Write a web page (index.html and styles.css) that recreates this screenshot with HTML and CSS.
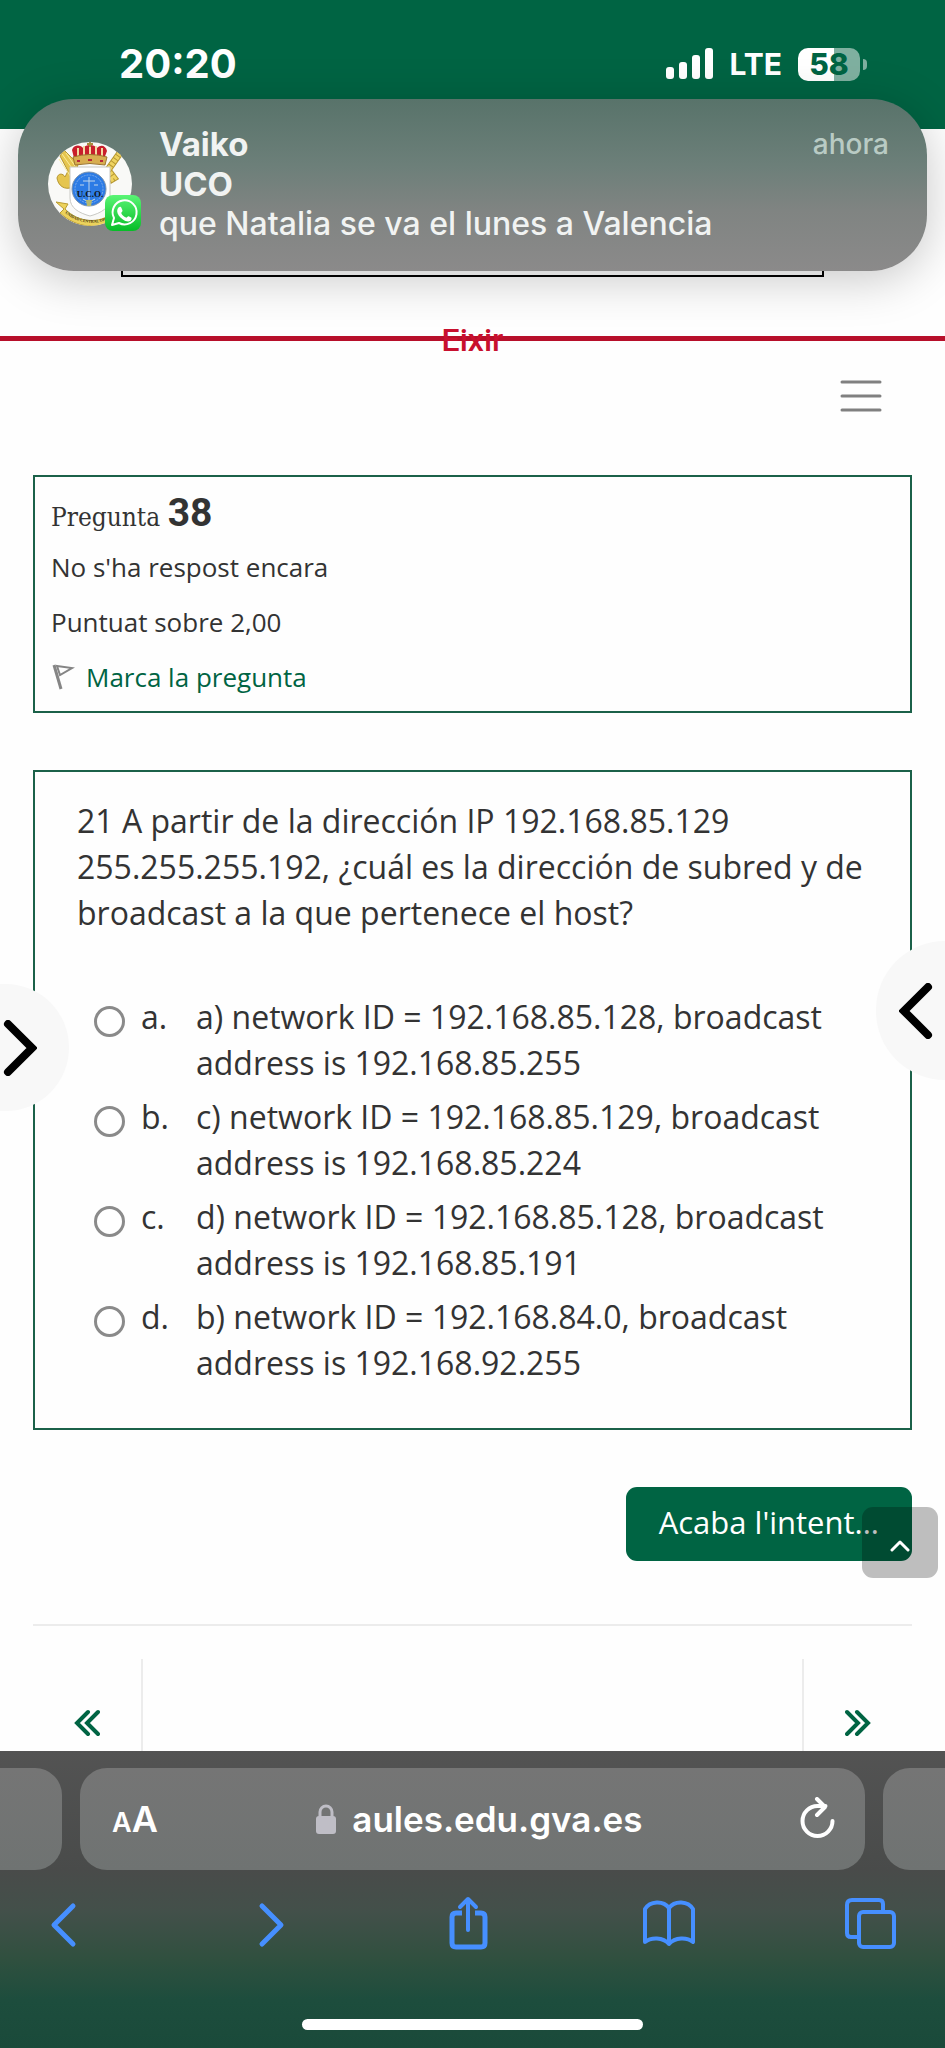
FILE: index.html
```html
<!DOCTYPE html>
<html lang="ca">
<head>
<meta charset="utf-8">
<meta name="viewport" content="width=device-width, initial-scale=1">
<title>Aules - Pregunta 38</title>
<link rel="stylesheet" href="styles.css">
</head>
<body>
<div class="status-bar">
  <time class="clock">20:20</time>
  <div class="status-icons">
    <svg class="signal" width="48" height="32" viewBox="0 0 48 32" aria-hidden="true"><g fill="#fff"><rect x="0" y="19" width="8" height="12" rx="3"/><rect x="13" y="14" width="8" height="17" rx="3"/><rect x="26" y="7" width="8" height="24" rx="3"/><rect x="39" y="0" width="8" height="31" rx="3"/></g></svg>
    <span class="network">LTE</span>
    <span class="battery"><span class="battery-level">58</span><span class="battery-tip"></span></span>
  </div>
</div>

<aside class="notification">
  <svg class="avatar" width="96" height="84" viewBox="0 0 96 84" role="img" aria-label="UCO, WhatsApp">
    <defs>
      <clipPath id="face"><circle cx="42" cy="42" r="42"/></clipPath>
      <linearGradient id="wa" x1="0" y1="0" x2="0" y2="1"><stop offset="0" stop-color="#5af575"/><stop offset="1" stop-color="#06bd27"/></linearGradient>
    </defs>
    <circle cx="42" cy="42" r="42" fill="#f9f9f7"/>
    <g clip-path="url(#face)">
      <path d="M16 8l14 14-5 23c-9 4-15-2-16-9 1-5 6-5 8-1l3-6-8-15z" fill="#e5c54f" stroke="#b59632"/>
      <path d="M14 12l12 17M11 17l12 18M18 11l9 13" stroke="#faec9a" fill="none"/>
      <path d="M72 11L60 28l6 8-5 3" fill="none" stroke="#b59632" stroke-width="7"/>
      <path d="M72 11L60 28l6 8-5 3" fill="none" stroke="#efd35f" stroke-width="5" stroke-dasharray="3 1"/>
      <path d="M8 60l12 2-3 5c14 14 34 15 48 4l5 7C50 88 28 86 12 71l4-4z" fill="#ecd25c" stroke="#b99b31"/>
      <path id="ribbon" d="M17 71c14 12 34 13 50 3" fill="none"/>
      <path d="M22 25h40v31c0 10-9 15-20 18-11-3-20-8-20-18z" fill="#fff" stroke="#c8c8c4"/>
      <path d="M26 16L24 8c2-6 9-5 11-2 3-4 11-4 14 0 4-4 9-2 10 3l-3 8z" fill="#c81e2b"/>
      <path d="M30 14V6M36 14V4M42 14V3M48 14V4M54 14V6" stroke="#f4d9a1" stroke-width="2"/>
      <path d="M42 0v5M39 2h6" stroke="#a78b3c" stroke-width="2"/>
      <path d="M25 15q17-5 34 0l-2 8q-15-3-30 0z" fill="#d8ad50" stroke="#9c7530"/>
      <path d="M29 19h3M40 18h4M52 19h3" stroke="#b7263a" stroke-width="2"/>
      <circle cx="41" cy="47" r="17" fill="#2c7be5" stroke="#7f93aa"/>
      <circle cx="41" cy="47" r="14" fill="none" stroke="#7cabea" stroke-dasharray="2 1"/>
      <path d="M41 35v26M35 39h12M32 43h4M46 43h4M35 57q6 4 12 0" stroke="#c3d8e9" fill="none"/>
      <path d="M38 58h6l-1 6h-4z" fill="#b7b96b"/>
    </g>
    <text font-family="Liberation Serif, serif" font-weight="bold" font-size="4" fill="#463c14"><textPath href="#ribbon">UNIDAD CENTRAL OPER</textPath></text>
    <text x="42" y="55" text-anchor="middle" font-family="Liberation Serif, serif" font-size="9" font-weight="bold" fill="#111">U.C.O.</text>
    <rect x="57" y="53" width="36" height="36" rx="8" fill="url(#wa)"/>
    <path d="M64 83l2-7a12 12 0 1 1 5 5z" fill="none" stroke="#fff" stroke-width="2" stroke-linejoin="round"/>
    <path d="M70.500 65.500c1-1 2.500-1 3 .500l1 2.500c.300.800-1.500 2-1.200 2.700 1 2 2.500 3.500 4.700 4.400.800.300 1.800-1.800 2.600-1.400l2.600 1.300c.800.400.300 2.500-.600 3.200-2 1.500-5 .800-8-1.400-3.200-2.300-5.200-5.200-5.400-7.800-.100-1.700.500-3.200 1.300-4z" fill="#fff"/>
  </svg>
  <div class="notification-text">
    <div class="notification-head"><strong>Vaiko</strong><span class="when">ahora</span></div>
    <strong>UCO</strong>
    <p>que Natalia se va el lunes a Valencia</p>
  </div>
</aside>

<header class="site-header">
  <div class="banner-box"></div>
  <a class="exit" href="#">Eixir</a>
</header>

<main class="page">
  <div class="menu-row">
    <button class="menu" type="button" aria-label="Menú"><svg width="42" height="34" viewBox="0 0 42 34"><path d="M2 3h38M2 17h38M2 31h38" stroke="#808080" stroke-width="3" stroke-linecap="round"/></svg></button>
  </div>

  <section class="card info">
    <h1>Pregunta <span>38</span></h1>
    <p>No s'ha respost encara</p>
    <p>Puntuat sobre 2,00</p>
    <a class="flag" href="#"><svg width="24" height="26" viewBox="0 0 24 26" aria-hidden="true"><path d="M3 1l7 24" stroke="#858585" stroke-width="3"/><path d="M6 2l15 2-12 7z" fill="none" stroke="#858585" stroke-width="2"/></svg>Marca la pregunta</a>
  </section>

  <form class="card question">
    <p class="stem">21 A partir de la dirección IP 192.168.85.129 255.255.255.192, ¿cuál es la dirección de subred y de broadcast a la que pertenece el host?</p>
    <div class="answers">
      <label><input type="radio" name="answer" value="a"><span>a.</span><span>a) network ID = 192.168.85.128, broadcast address is 192.168.85.255</span></label>
      <label><input type="radio" name="answer" value="b"><span>b.</span><span>c) network ID = 192.168.85.129, broadcast address is 192.168.85.224</span></label>
      <label><input type="radio" name="answer" value="c"><span>c.</span><span>d) network ID = 192.168.85.128, broadcast address is 192.168.85.191</span></label>
      <label><input type="radio" name="answer" value="d"><span>d.</span><span>b) network ID = 192.168.84.0, broadcast address is 192.168.92.255</span></label>
    </div>
  </form>

  <div class="actions"><button class="finish" type="button">Acaba l'intent...</button></div>

  <nav class="pager">
    <a href="#" aria-label="Activitat anterior"><svg width="26" height="28" viewBox="0 0 26 28"><path d="M14 3L3 14l11 11M24 3L13 14l11 11"/></svg></a>
    <span class="pager-middle"></span>
    <a href="#" aria-label="Activitat següent"><svg width="26" height="28" viewBox="0 0 26 28"><path d="M2 3l11 11L2 25M12 3l11 11-11 11"/></svg></a>
  </nav>

  <button class="drawer drawer-left" type="button" aria-label="Obri el calaix esquerre"><svg width="36" height="56" viewBox="0 0 36 56"><path d="M7 4l24 24L7 52"/></svg></button>
  <button class="drawer drawer-right" type="button" aria-label="Obri el calaix dret"><svg width="36" height="56" viewBox="0 0 36 56"><path d="M29 4L5 28l24 24"/></svg></button>
  <button class="to-top" type="button" aria-label="Torna a dalt"><svg width="20" height="12" viewBox="0 0 20 12"><path d="M2 10l8-8 8 8" fill="none" stroke="#fff" stroke-width="3" stroke-linecap="round" stroke-linejoin="round"/></svg></button>
</main>

<footer class="browser">
  <div class="tabs">
    <div class="tab tab-prev"></div>
    <div class="tab address">
      <button class="text-size" type="button" aria-label="Mida del text"><small>A</small>A</button>
      <div class="url"><svg width="22" height="31" viewBox="0 0 22 31" aria-hidden="true"><path d="M5 14V8a6 6 0 0 1 12 0v6" fill="none" stroke="#bfbec6" stroke-width="3"/><rect x="1" y="12" width="20" height="18" rx="3" fill="#bfbec6"/></svg><span>aules.edu.gva.es</span></div>
      <button class="reload" type="button" aria-label="Recarrega"><svg width="36" height="44" viewBox="0 0 36 44"><path d="M32.500 24A15 15 0 1 1 17.500 9h8M17 2l8 8-8 8" fill="none" stroke="#fff" stroke-width="4" stroke-linecap="round" stroke-linejoin="round"/></svg></button>
    </div>
    <div class="tab tab-next"></div>
  </div>
  <div class="toolbar">
    <button type="button" aria-label="Arrere"><svg viewBox="0 0 54 56"><path d="M36 10L17 29l19 19" stroke-width="5"/></svg></button>
    <button type="button" aria-label="Avant"><svg viewBox="0 0 54 56"><path d="M23 10l19 19-19 19" stroke-width="5"/></svg></button>
    <button type="button" aria-label="Compartix"><svg viewBox="0 0 54 56"><path d="M22 17h-6q-4 0-4 4v26q0 4 4 4h25q4 0 4-4V21q0-4-4-4h-6" stroke-linecap="butt" stroke-width="5"/><path d="M28 34V3M20 11l8-8 8 8" stroke-width="4"/></svg></button>
    <button type="button" aria-label="Marcadors"><svg viewBox="0 0 54 56"><path d="M27 12c-6-8-19-7-24 1v33c6-5 18-5 24 2 6-7 18-7 24-2V13c-5-8-18-9-24-1v36" stroke-width="4"/></svg></button>
    <button type="button" aria-label="Pestanyes"><svg viewBox="0 0 54 56"><path d="M14 41H8q-4 0-4-4V9q0-5 5-5h27q4 0 4 4v7" stroke-width="4" stroke-linecap="butt"/><rect x="16" y="16" width="35" height="35" rx="4" stroke-width="4"/></svg></button>
  </div>
  <div class="home-indicator"></div>
</footer>
</body>
</html>
```
FILE: styles.css
```css
* { box-sizing: border-box; }

body {
  position: relative;
  display: flex;
  flex-direction: column;
  min-height: 100vh;
  margin: 0;
  overflow-x: hidden;
  background: #fefefe;
  color: #333;
  font-family: "Open Sans", sans-serif;
}

p, h1 { margin: 0; }
a { text-decoration: none; }
svg { display: block; flex: none; }

button {
  padding: 0;
  border: 0;
  background: none;
  color: inherit;
  font: inherit;
}

/* Phone status bar */
.status-bar {
  display: flex;
  justify-content: space-between;
  align-items: flex-start;
  height: 129px;
  padding: 40px 78px 0 119px;
  background: #006443;
  color: #fff;
  font-family: Inter, sans-serif;
}
.clock { font-size: 40px; font-weight: 700; line-height: 48px; }
.status-icons { display: flex; align-items: center; gap: 16px; height: 48px; }
.network { font-size: 30px; font-weight: 700; }
.battery { display: flex; align-items: center; gap: 3px; }
.battery-level {
  width: 62px;
  border-radius: 10px;
  background: linear-gradient(90deg, #fff 58%, #7fb0a0 58%);
  color: #006443;
  font-size: 30px;
  font-weight: 800;
  line-height: 33px;
  text-align: center;
}
.battery-tip { width: 4px; height: 11px; border-radius: 0 4px 4px 0; background: #7fb0a0; }

/* Notification over the page */
.notification {
  position: absolute;
  z-index: 5;
  top: 99px;
  left: 18px;
  right: 18px;
  display: flex;
  align-items: center;
  gap: 15px;
  padding: 25px 38px 27px 30px;
  border-radius: 56px;
  background: linear-gradient(#58736a, #6c7f79 38%, #808482 65%, #8b8a8a);
  box-shadow: 0 8px 48px rgba(0, 0, 0, .22);
  color: #f1f3f2;
  font: 500 32px/40px Inter, sans-serif;
}
.avatar { overflow: visible; }
.notification-text { flex: 1; }
.notification-text strong { display: block; font-size: 33px; font-weight: 700; }
.notification-head { display: flex; justify-content: space-between; }
.when { color: #b9cbc4; font-size: 28px; }

/* Site header */
.site-header {
  display: flex;
  flex-direction: column;
  align-items: center;
  border-bottom: 5px solid #b70f2a;
}
.banner-box { width: 74.4%; height: 148px; border: 2px solid #000; border-top: 0; }
.exit {
  margin: 43px 0 -24px;
  color: #c8102e;
  font: 500 32px/40px Roboto, sans-serif;
}

/* Quiz page */
.page {
  position: relative;
  display: flex;
  flex: 1;
  flex-direction: column;
  padding: 38px 33px 0;
}
.menu-row { display: flex; justify-content: flex-end; padding-right: 30px; }
.card { border: 2px solid #1b6149; background: #fefefe; }

.info {
  display: flex;
  flex-direction: column;
  gap: 15px;
  margin-top: 62px;
  padding: 21px 16px 14px;
  font-size: 26px;
  line-height: 40px;
}
.info h1 { font: 400 26px/30px "DejaVu Serif Condensed", "DejaVu Serif", serif; }
.info h1 span { font: 700 39px/30px Roboto, sans-serif; }
.flag { display: flex; align-items: center; gap: 11px; color: #006443; }

.question {
  margin-top: 57px;
  padding: 26px 42px 42px;
  font-size: 32px;
  line-height: 46px;
}
.answers { display: grid; gap: 8px; margin-top: 58px; padding-left: 17px; }
.answers label { display: grid; grid-template-columns: 47px 55px 1fr; }
.answers input {
  width: 31px;
  height: 31px;
  margin: 12px 0 0;
  border: 3px solid #8a8a8a;
  border-radius: 50%;
  appearance: none;
  background: #fff;
}
.answers input:checked { background: radial-gradient(#006443 50%, #fff 55%); }

.actions { display: flex; justify-content: flex-end; margin-top: 57px; }
.finish {
  height: 74px;
  padding: 0 33px 4px;
  border-radius: 11px;
  background: #006443;
  color: #fff;
  font-size: 31px;
}

.pager {
  display: flex;
  flex: 1;
  margin-top: 63px;
  padding-top: 33px;
  border-top: 2px solid #ececec;
}
.pager a { width: 108px; padding: 50px 41px 0; }
.pager path { fill: none; stroke: #006443; stroke-width: 4; stroke-linecap: round; }
.pager-middle { flex: 1; border: solid #ececec; border-width: 0 2px; }

/* Controls floating over the quiz */
.drawer { position: absolute; display: flex; align-items: center; background: #f8f8f8; }
.drawer path { fill: none; stroke: #000; stroke-width: 8; stroke-linecap: round; }
.drawer-left { top: 643px; left: 0; width: 69px; height: 127px; padding-left: 1px; border-radius: 0 64px 64px 0; }
.drawer-right { top: 600px; right: 0; width: 69px; height: 139px; padding-left: 23px; border-radius: 70px 0 0 70px; }
.to-top {
  position: absolute;
  top: 1166px;
  right: 7px;
  display: flex;
  align-items: center;
  justify-content: center;
  width: 76px;
  height: 71px;
  padding-top: 6px;
  border-radius: 11px;
  background: rgba(0, 0, 0, .25);
}

/* Browser chrome */
.browser {
  height: 297px;
  padding-top: 17px;
  background: linear-gradient(#535353, #494b4a 40%, #43504a 54%, #30503f 70%, #1d4d3d 84%, #1a4a3a);
  color: #fff;
  font-family: Inter, sans-serif;
}
.tabs { display: flex; gap: 18px; height: 102px; }
.tab { width: 62px; border-radius: 27px; background: linear-gradient(#757575, #6f7372); }
.tab-prev { border-radius: 0 27px 27px 0; }
.tab-next { border-radius: 27px 0 0 27px; }
.address { display: flex; flex: 1; align-items: center; justify-content: space-between; padding: 0 29px 0 32px; }
.text-size { font-size: 36px; font-weight: 600; }
.text-size small { font-size: 27px; }
.url { display: flex; align-items: center; gap: 15px; font-size: 35px; font-weight: 600; }
.toolbar { display: flex; justify-content: space-between; padding: 26px 48px 0 37px; }
.toolbar svg { width: 54px; height: 56px; fill: none; stroke: #468fff; stroke-linecap: round; stroke-linejoin: round; }
.home-indicator { width: 36%; height: 11px; margin: 67px auto 0; border-radius: 6px; background: #fff; }
```
